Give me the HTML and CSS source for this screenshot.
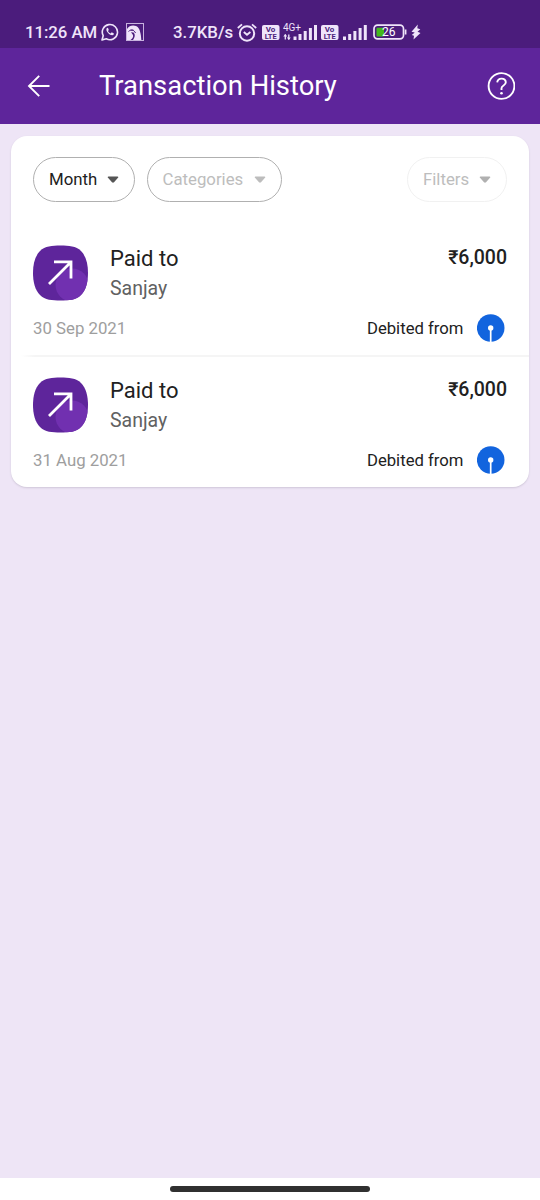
FILE: index.html
```html
<!DOCTYPE html>
<html lang="en">
<head>
<meta charset="utf-8">
<title>Transaction History</title>
<link rel="stylesheet" href="styles.css">
</head>
<body>
<svg class="defs" width="0" height="0" aria-hidden="true">
  <symbol id="signal" viewBox="0 0 25 16">
    <path d="M0 12.500h3V16H0zM5.200 10h3v6h-3zM10.400 7h3v9h-3zM15.600 4h3v12h-3zM20.800 1h3v15h-3z" fill="#efe4fa"/>
  </symbol>
  <clipPath id="squircle"><path d="M27.500 .5C36 .5 43 1 48 6S55 19 55 28 53 45 48 50 36 55.500 27.500 55.500 12 55 7 50 0 37 0 28 2 11 7 6 19 .5 27.500 .5z"/></clipPath>
  <symbol id="paid" viewBox="0 0 56 56">
    <g clip-path="url(#squircle)">
      <rect width="56" height="56" fill="#5e259b"/>
      <circle cx="39" cy="40" r="16.500" fill="#7130b0"/>
    </g>
    <path d="M16 39L37.500 17.500M21 16.800H38V33.500" fill="none" stroke="#fff" stroke-width="2.800"/>
  </symbol>
  <symbol id="bank" viewBox="0 0 28 28">
    <circle cx="13.700" cy="14" r="13.800" fill="#1264de"/>
    <circle cx="13.700" cy="14" r="2.700" fill="#fff"/>
    <path d="M13.700 14V28" stroke="#fff" stroke-width="1.700"/>
  </symbol>
</svg>

<header class="status-bar">
  <span class="clock">11:26 AM</span>
  <svg class="whatsapp" viewBox="0 0 18 18" width="18" height="18">
    <path d="M1 17l1.200-4.300A7.600 7.600 0 1 1 5.300 15.800z" fill="none" stroke="#efe4fa" stroke-width="1.600" stroke-linejoin="round"/>
    <path d="M6.200 4.800c-1.500 1-1 3.200.9 5.300s4.600 3 5.600 1.500l.2-1.200-2.200-1.100-1 1.100c-1.400-.5-2.300-1.500-2.700-2.500l.8-1-.8-2z" fill="#efe4fa"/>
  </svg>
  <svg class="falcon" viewBox="0 0 18 18" width="18" height="18">
    <rect x=".5" y=".5" width="17" height="17" fill="none" stroke="#c7b2de"/>
    <path d="M1 6C3 2.500 7 1.800 10 3c4 1.700 5 8 5.300 14H7c2-3 2.500-5.500.5-7.500L5 9.200 7 12c.7 2-1 4-2.500 5H1z" fill="#efe4fa"/>
    <path d="M2.500 8.500C5 6 8 6.700 9.500 10M4.500 7.200h3" fill="none" stroke="#4b1c7c" stroke-width="1"/>
  </svg>
  <span class="speed">3.7KB/s</span>
  <svg class="alarm" viewBox="0 0 20 19" width="20" height="19">
    <circle cx="10" cy="10.500" r="7.200" fill="none" stroke="#efe4fa" stroke-width="2"/>
    <path d="M.8 5L5 1.400M19.200 5L15 1.400M6.800 9l3.200 2.800L13.400 9" fill="none" stroke="#efe4fa" stroke-width="1.800"/>
  </svg>
  <svg class="volte" viewBox="0 0 18 15" width="18" height="15">
    <rect width="17.500" height="15" rx="2" fill="#efe4fa"/>
    <text x="8.500" y="7" text-anchor="middle" font-size="8" font-weight="700" fill="#4b1c7c">Vo</text>
    <text x="8.700" y="13.800" text-anchor="middle" font-size="7.500" font-weight="700" fill="#4b1c7c">LTE</text>
  </svg>
  <svg class="network" viewBox="0 0 35 20" width="35" height="20">
    <text x="0" y="9" font-size="10" font-weight="400" fill="#efe4fa" textLength="18">4G+</text>
    <path d="M2.300 12.500v5M5.800 12.500v5" stroke="#efe4fa" stroke-width="1.300"/>
    <path d="M.3 14.500l2-2.500 2 2.500zM3.800 15.500h4l-2 2.500z" fill="#efe4fa"/>
    <path d="M10.500 14.500h3V18h-3zM15.500 12h3v6h-3zM20.700 9h3v9h-3zM25.900 6h3v12h-3zM31 3h3v15h-3z" fill="#efe4fa"/>
  </svg>
  <svg class="volte second" viewBox="0 0 18 15" width="18" height="15">
    <rect width="17.500" height="15" rx="2" fill="#efe4fa"/>
    <text x="8.500" y="7" text-anchor="middle" font-size="8" font-weight="700" fill="#4b1c7c">Vo</text>
    <text x="8.700" y="13.800" text-anchor="middle" font-size="7.500" font-weight="700" fill="#4b1c7c">LTE</text>
  </svg>
  <svg class="signal" width="25" height="16"><use href="#signal"/></svg>
  <svg class="battery" viewBox="0 0 34 16" width="34" height="16">
    <rect x="1" y="1.200" width="29.500" height="13.600" rx="3.500" fill="none" stroke="#efe4fa" stroke-width="1.700"/>
    <rect x="3.500" y="3.700" width="7.500" height="8.800" rx="1" fill="#43b91c"/>
    <path d="M32.600 5.500v5" stroke="#efe4fa" stroke-width="1.700"/>
    <text x="15.800" y="12.300" text-anchor="middle" font-size="12" font-weight="400" fill="#fff">26</text>
  </svg>
  <svg class="bolt" viewBox="0 0 10 16" width="10" height="16"><path d="M6.800.5L.5 7.800l3.200.8L.8 11l2.200.8-.5 3.700L9.500 9 6.500 7.800 9.300 5.200 6.300 4.300z" fill="#efe4fa"/></svg>
</header>

<nav class="app-bar">
  <svg class="back" viewBox="0 0 24 24" width="24" height="24"><path d="M12.200 1.800L2 12l10.200 10.200M2 12h20.500" fill="none" stroke="#fff" stroke-width="1.900"/></svg>
  <h1 class="title">Transaction History</h1>
  <svg class="help" viewBox="0 0 28 28" width="28" height="28">
    <circle cx="14.500" cy="14" r="12.900" fill="none" stroke="#fff" stroke-width="1.900"/>
    <path d="M10.200 10.400C10.700 5.400 18.800 5.300 18.800 10.300C18.800 13.800 14.500 13.100 14.500 16.200V18" fill="none" stroke="#fff" stroke-width="1.900"/>
    <circle cx="14.500" cy="21.300" r="1.300" fill="#fff"/>
  </svg>
</nav>

<main class="content">
  <section class="card">
    <div class="filters">
      <button class="chip month">Month<svg class="caret" viewBox="0 0 12 8" width="12" height="8"><path d="M1 2.800q-.8-1 .5-1.200h9q1.300.2.5 1.200L7 7.300q-1 .8-2 0z" fill="currentColor"/></svg></button>
      <button class="chip categories">Categories<svg class="caret" viewBox="0 0 12 8" width="12" height="8"><path d="M1 2.800q-.8-1 .5-1.200h9q1.300.2.5 1.200L7 7.300q-1 .8-2 0z" fill="currentColor"/></svg></button>
      <button class="chip more">Filters<svg class="caret" viewBox="0 0 12 8" width="12" height="8"><path d="M1 2.800q-.8-1 .5-1.200h9q1.300.2.5 1.200L7 7.300q-1 .8-2 0z" fill="currentColor"/></svg></button>
    </div>
    <article class="transaction">
      <div class="summary">
        <svg class="paid-icon" width="56" height="56"><use href="#paid"/></svg>
        <div class="payee"><span class="kind">Paid to</span><span class="name">Sanjay</span></div>
        <span class="amount">₹6,000</span>
      </div>
      <div class="details"><span class="date">30 Sep 2021</span><span class="source">Debited from</span><svg class="bank" width="28" height="28"><use href="#bank"/></svg></div>
    </article>
    <article class="transaction">
      <div class="summary">
        <svg class="paid-icon" width="56" height="56"><use href="#paid"/></svg>
        <div class="payee"><span class="kind">Paid to</span><span class="name">Sanjay</span></div>
        <span class="amount">₹6,000</span>
      </div>
      <div class="details"><span class="date">31 Aug 2021</span><span class="source">Debited from</span><svg class="bank" width="28" height="28"><use href="#bank"/></svg></div>
    </article>
  </section>
</main>
<footer class="gesture-bar"><div class="handle"></div></footer>
</body>
</html>
```

FILE: styles.css
```css
* { box-sizing: border-box; }
body {
  margin: 0;
  width: 540px;
  height: 1200px;
  display: flex;
  flex-direction: column;
  overflow: hidden;
  background: #eee5f6;
  font-family: Roboto, "Noto Sans", sans-serif;
  color: #212121;
}
svg { display: block; flex: none; }
.defs { width: 0; height: 0; }
.status-bar {
  height: 48px;
  padding: 16px 0 0 25px;
  display: flex;
  align-items: center;
  background: #4b1c7c;
  color: #efe4fa;
  font-size: 16.800px;
  font-weight: 500;
  white-space: nowrap;
}
.clock { width: 76px; flex: none; letter-spacing: -0.050px; }
.whatsapp { margin-right: 7px; }
.falcon { margin-right: 29px; }
.speed { width: 64px; flex: none; }
.alarm { margin-right: 5px; }
.volte { margin-right: 3px; }
.network { margin: 0 3px 0 0; }
.second { margin-right: 4px; }
.signal { margin-right: 5px; }
.battery { margin-right: 4px; }

.app-bar {
  height: 76px;
  padding: 0 25px 0 27px;
  display: flex;
  align-items: center;
  background: #5e259b;
  color: #fff;
}
.title { margin: 1px auto 0 48px; font-size: 27.400px; font-weight: 400; line-height: 33px; white-space: nowrap; }

.content { flex: 1; padding: 12px 11px; }
.card {
  height: 351px;
  background: #fff;
  border-radius: 16px;
  box-shadow: 0 1px 2px #cfc6d8;
}
.filters { display: flex; padding: 21px 22px 0; }
.chip {
  height: 45px;
  padding: 0 15px 1px;
  display: flex;
  align-items: center;
  justify-content: space-between;
  border: 1px solid #b0b0b0;
  border-width: 1.500px;
  border-radius: 22.500px;
  background: none;
  font: 400 16.800px Roboto, sans-serif;
}
.month { width: 102px; color: #212121; }
.month .caret { color: #555; }
.categories { width: 135px; margin-left: 11.500px; padding-left: 15px; color: #bdbdbd; }
.more { width: 100px; margin-left: auto; border-color: #f1f1f1; color: #bdbdbd; }
.more .caret { color: #b0b0b0; }

.transaction { height: 132px; padding: 22px 22px 0; }
.filters + .transaction { height: 153px; padding-top: 43px; }
.transaction + .transaction {
  background: linear-gradient(to right, transparent 10px, #f5f5f5 24px) no-repeat 0 0 / 100% 2px;
}
.summary { display: flex; align-items: flex-start; }
.payee { margin-left: 21px; display: flex; flex-direction: column; }
.kind { font-size: 22px; line-height: 28px; }
.name { font-size: 19.500px; line-height: 32px; color: #616161; }
.amount { margin: 1px 0 0 auto; font-size: 19.500px; line-height: 24px; font-weight: 500; }
.details { display: flex; align-items: center; height: 28px; margin-top: 9px; }
.date { font-size: 16.800px; color: #9e9e9e; }
.source { margin-left: auto; font-size: 16.700px; }
.bank { margin: 0 2px 0 13.500px; }

.gesture-bar { height: 22px; background: #fff; display: flex; justify-content: center; padding-top: 8px; }
.handle { width: 200px; height: 6px; border-radius: 3px; background: #303030; }
```
